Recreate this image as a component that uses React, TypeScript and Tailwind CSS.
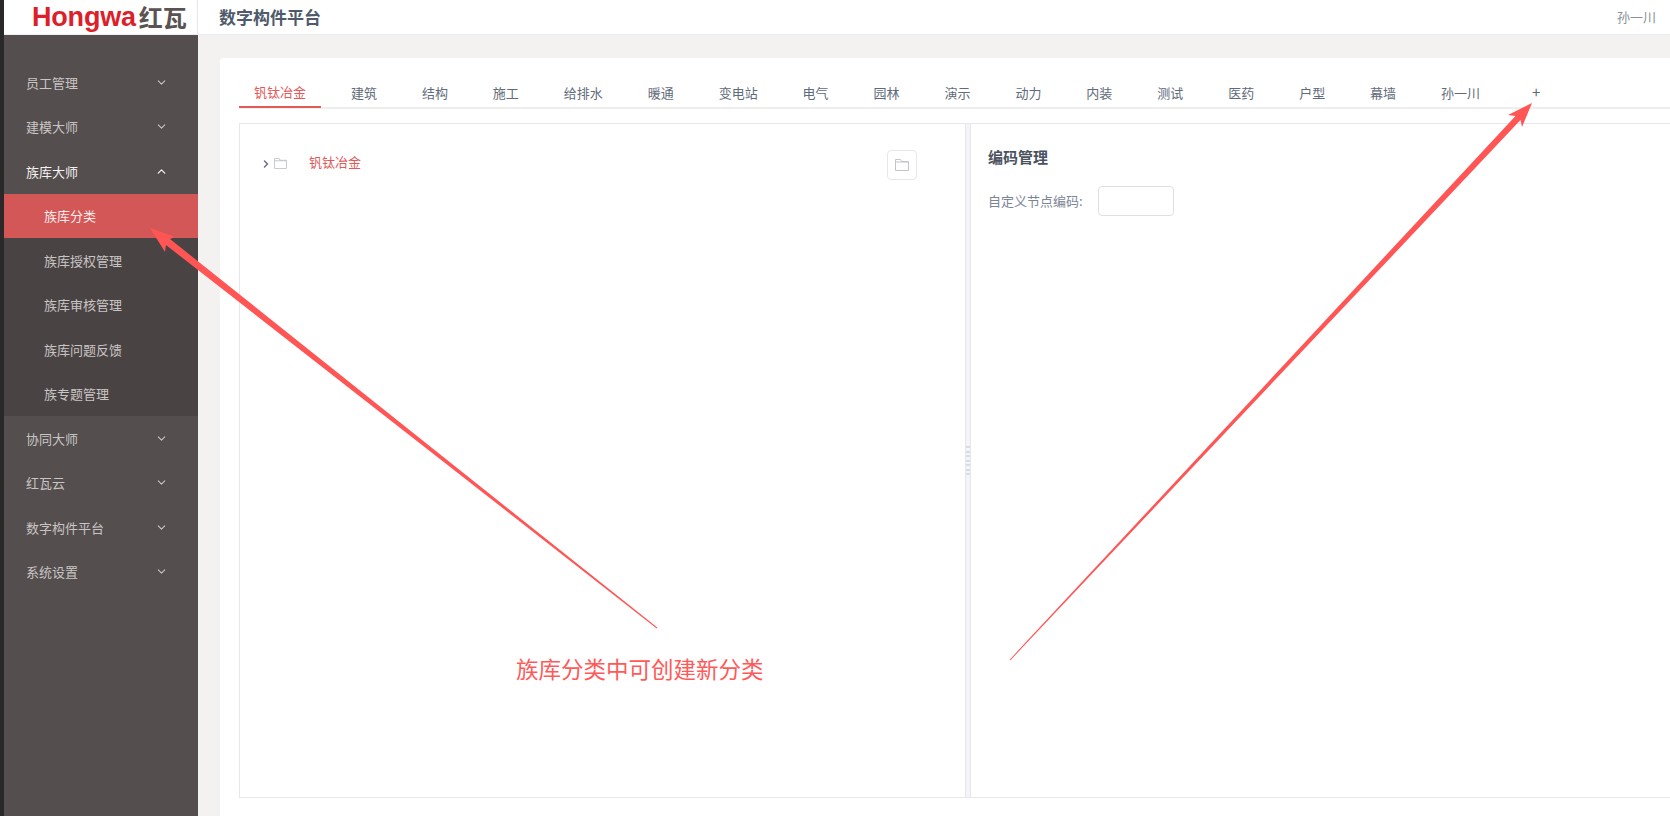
import { ChevronDown, ChevronRight, ChevronUp } from "lucide-react";

const tabs = ["钒钛冶金", "建筑", "结构", "施工", "给排水", "暖通", "变电站", "电气", "园林", "演示", "动力", "内装", "测试", "医药", "户型", "幕墙", "孙一川"];

const subItems = ["族库分类", "族库授权管理", "族库审核管理", "族库问题反馈", "族专题管理"];

function FolderIcon({ className }: { className: string }) {
  return (
    <svg viewBox="0 0 14 12" fill="none" stroke="currentColor" strokeWidth="1" className={className}>
      <path d="M.5 11.5V.5h5l1 2h7v9z" />
      <path d="M.5 3h13" />
    </svg>
  );
}

function MenuRow({ label, open }: { label: string; open?: boolean }) {
  return (
    <div className={`flex h-[44.5px] items-center justify-between pl-[22px] pr-[30px] ${open ? "text-[#f4f1f1]" : "text-[#c9c5c5]"}`}>
      <span>{label}</span>
      {open ? <ChevronUp size={13} strokeWidth={2.4} /> : <ChevronDown size={13} strokeWidth={2} />}
    </div>
  );
}

export default function App() {
  return (
    <div className="relative flex h-[816px] w-[1670px] overflow-hidden bg-[#f3f2f0] font-['Noto_Sans_CJK_SC','Liberation_Sans',sans-serif] text-[13px]">
      <div className="w-1 shrink-0 bg-[#2a2828]" />
      <div className="flex min-w-0 flex-1 flex-col">
        <header className="flex h-[35px] shrink-0 items-center overflow-hidden border-b border-[#eeeeee] bg-white">
          <div className="flex h-full w-[194px] shrink-0 items-center border-r border-[#e8e8e8] pl-[28px]">
            <span className="font-['Liberation_Sans',sans-serif] text-[27px] leading-none font-bold tracking-[-0.2px] text-[#dc1f2b]">Hongwa</span>
            <span className="ml-[3px] text-[24px] leading-none font-bold text-[#5b5352]">红瓦</span>
          </div>
          <span className="ml-[21px] text-[17px] font-bold text-[#4e5a6b]">数字构件平台</span>
          <span className="mr-[14px] ml-auto text-[#8a8f96]">孙一川</span>
        </header>
        <div className="flex min-h-0 flex-1">
          <aside className="w-[194px] shrink-0 bg-[#544e4e] pt-[25px]">
            <MenuRow label="员工管理" />
            <MenuRow label="建模大师" />
            <MenuRow label="族库大师" open />
            <div className="bg-[#4a4343]">
              {subItems.map((item, i) => (
                <div key={item} className={`flex h-[44.5px] items-center pl-[40px] ${i === 0 ? "bg-[#d45757] text-[#f8ecec]" : "text-[#c9c5c5]"}`}>
                  {item}
                </div>
              ))}
            </div>
            <MenuRow label="协同大师" />
            <MenuRow label="红瓦云" />
            <MenuRow label="数字构件平台" />
            <MenuRow label="系统设置" />
          </aside>
          <main className="min-w-0 flex-1 pt-[23px] pl-[22px]">
            <div className="flex h-full flex-col rounded-tl-[4px] bg-white pt-[16px] pr-0 pb-[18px] pl-[19px]">
              <nav className="flex h-[35px] shrink-0 gap-[14.93px] border-b-2 border-[#eeeeee] text-[#5f6b7a]">
                {tabs.map((tab, i) => (
                  <div key={tab} className={`flex h-[34px] items-center px-[15px] pt-[4px] ${i === 0 ? "border-b-2 border-[#e05a5a] text-[#e05a5a]" : ""}`}>
                    {tab}
                  </div>
                ))}
                <div className="flex h-[33px] items-center pt-[4px] pl-[22px] text-[15px]">+</div>
              </nav>
              <div className="mt-[14px] flex min-h-0 flex-1 border border-r-0 border-[#e4e7ed]">
                <section className="flex w-[725px] shrink-0 items-start justify-between pt-[26px] pr-[48px] pl-[20px]">
                  <div className="flex h-[24px] items-center text-[#e05a5a]">
                    <ChevronRight size={12} strokeWidth={3} className="mt-[3px] text-[#6b7280]" />
                    <FolderIcon className="mt-[2px] ml-[2px] h-[11px] w-[13px] text-[#c0c4cc]" />
                    <span className="ml-[22px]">钒钛冶金</span>
                  </div>
                  <div className="flex h-[30px] w-[30px] items-center justify-center rounded-[4px] border border-[#e4e7ed]">
                    <FolderIcon className="h-[12px] w-[14px] text-[#c0c4cc]" />
                  </div>
                </section>
                <div className="flex w-[6px] shrink-0 items-center border-x border-[#e4e7ed] bg-[#f5f5f7]">
                  <div className="flex w-full flex-col gap-[2.5px]">
                    {[0, 1, 2, 3, 4, 5, 6].map((n) => (
                      <div key={n} className="h-[2px] bg-[#d9dce3]" />
                    ))}
                  </div>
                </div>
                <section className="min-w-0 flex-1 pt-[22px] pl-[17px]">
                  <h2 className="text-[15px] font-bold text-[#4a5260]">编码管理</h2>
                  <div className="mt-[17px] flex items-center">
                    <span className="text-[13px] text-[#7b8594]">自定义节点编码:</span>
                    <div className="ml-[15px] h-[30px] w-[76px] rounded-[4px] border border-[#dcdfe6]" />
                  </div>
                </section>
              </div>
            </div>
          </main>
        </div>
      </div>
      {/* annotation drawn over the screenshot */}
      <svg className="pointer-events-none absolute top-0 left-0" width="1670" height="816" fill="#ff5555">
        <polygon points="150,228 175,237 170,239 657.3,627.6 656.7,628.4 166,245 165,252" />
        <polygon points="1532,103 1508,115 1515.5,116 1009.6,659.7 1010.4,660.3 1520.5,120 1522,127" />
      </svg>
      <div className="absolute top-[650px] left-[516px] text-[22.5px] leading-[36px] whitespace-nowrap text-[#ff5a5a]">族库分类中可创建新分类</div>
    </div>
  );
}
